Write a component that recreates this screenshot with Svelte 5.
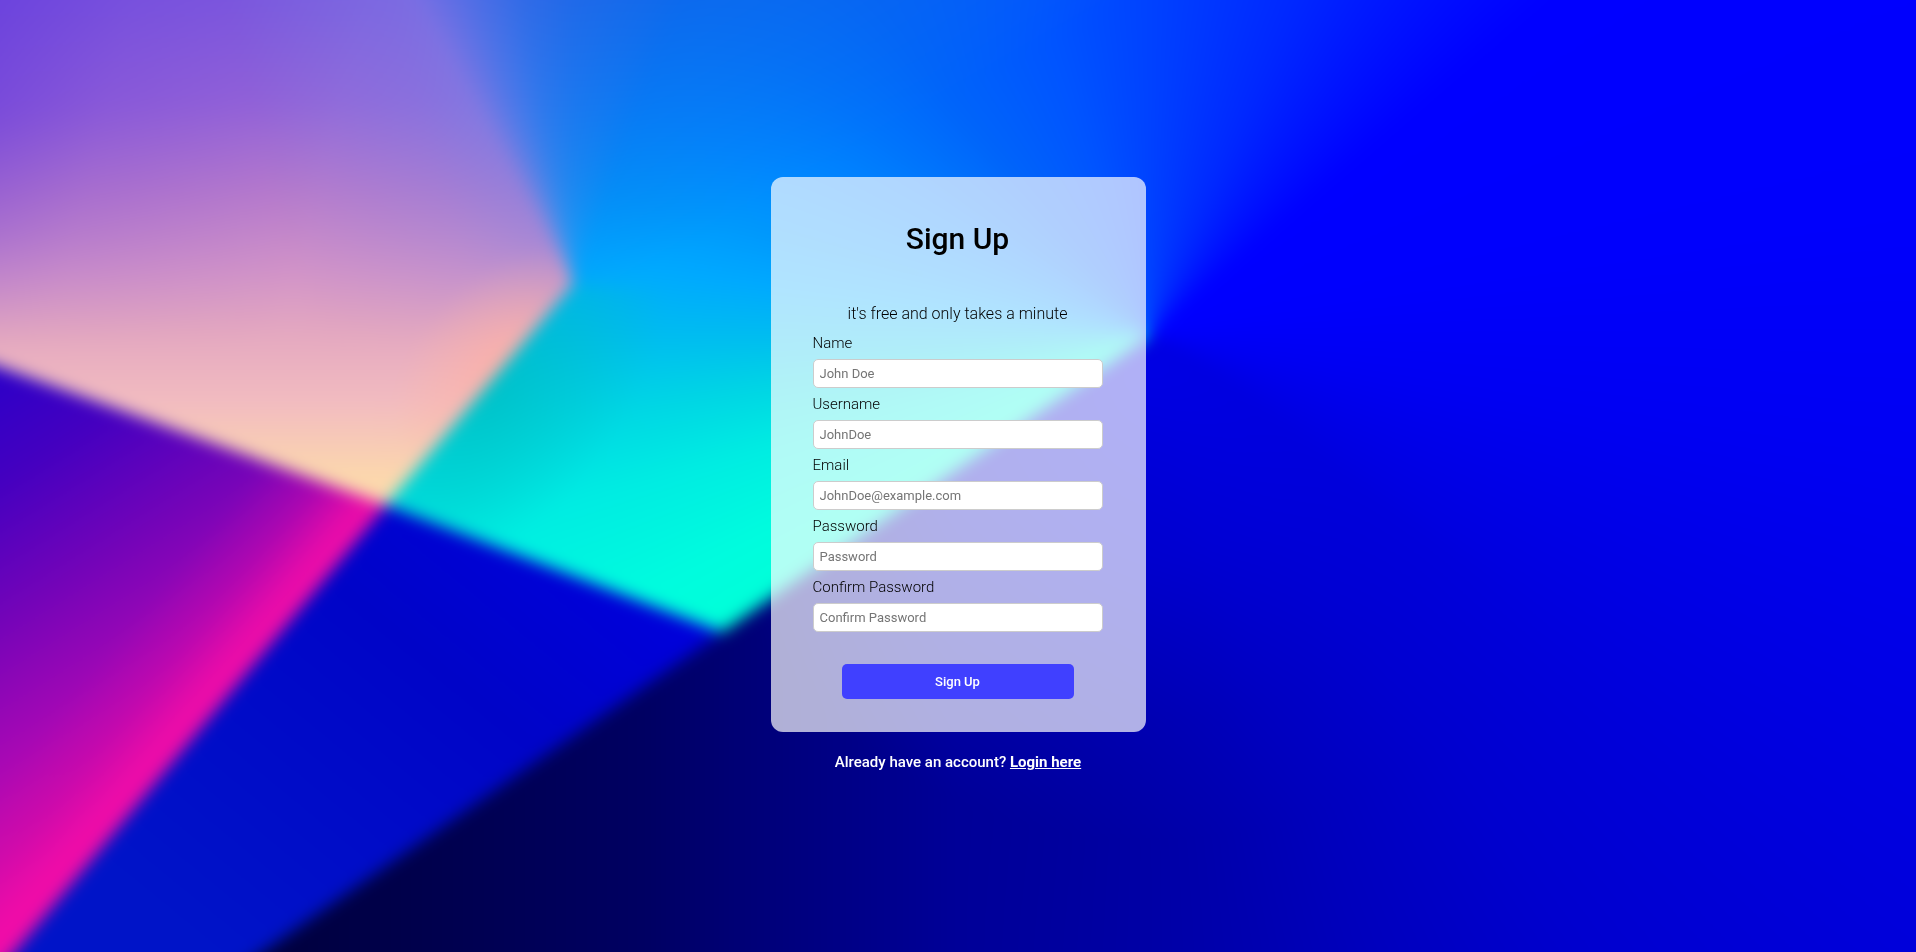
<script>
  const fields = [
    { id: 'name', label: 'Name', type: 'text', placeholder: 'John Doe' },
    { id: 'username', label: 'Username', type: 'text', placeholder: 'JohnDoe' },
    { id: 'email', label: 'Email', type: 'email', placeholder: 'JohnDoe@example.com' },
    { id: 'password', label: 'Password', type: 'password', placeholder: 'Password' },
    { id: 'confirm', label: 'Confirm Password', type: 'password', placeholder: 'Confirm Password' }
  ];
</script>

<!-- Wallpaper: blurred colour facets, scaled to cover the window -->
<div class="wallpaper" aria-hidden="true">
  <div class="scene">
    <svg class="facets" viewBox="-50 -50 2016 1052">
      <defs>
        <radialGradient id="teal" gradientUnits="userSpaceOnUse" cx="0" cy="0" r="1" gradientTransform="translate(490 390) rotate(-50) scale(230 130)">
          <stop offset="0" stop-color="#00bcb8" stop-opacity="0.65" />
          <stop offset="0.5" stop-color="#00c0bc" stop-opacity="0.35" />
          <stop offset="1" stop-color="#00c0c0" stop-opacity="0" />
        </radialGradient>
        <linearGradient id="azure" gradientUnits="userSpaceOnUse" x1="560" y1="-50" x2="720" y2="230">
          <stop offset="0" stop-color="#145ee4" stop-opacity="0.95" />
          <stop offset="1" stop-color="#1070e8" stop-opacity="0" />
        </linearGradient>
        <linearGradient id="navy" gradientUnits="userSpaceOnUse" x1="272" y1="0" x2="1250" y2="0">
          <stop offset="0" stop-color="#00003e" />
          <stop offset="0.38" stop-color="#000062" />
          <stop offset="0.48" stop-color="#000076" />
          <stop offset="0.7" stop-color="#000098" />
          <stop offset="1" stop-color="#0000b0" stop-opacity="0" />
        </linearGradient>
        <radialGradient id="glow" gradientUnits="userSpaceOnUse" cx="1150" cy="370" r="470">
          <stop offset="0" stop-color="#0000e4" />
          <stop offset="0.4" stop-color="#0000dc" stop-opacity="0.75" />
          <stop offset="0.75" stop-color="#0000d8" stop-opacity="0.25" />
          <stop offset="1" stop-color="#0000d8" stop-opacity="0" />
        </radialGradient>
        <linearGradient id="blue" gradientUnits="userSpaceOnUse" x1="600" y1="540" x2="240" y2="980">
          <stop offset="0" stop-color="#0000dc" />
          <stop offset="0.35" stop-color="#0004c8" />
          <stop offset="1" stop-color="#0014c8" />
        </linearGradient>
        <linearGradient id="violet" gradientUnits="userSpaceOnUse" x1="165" y1="265" x2="419" y2="671">
          <stop offset="0" stop-color="#2c00c8" />
          <stop offset="0.2" stop-color="#4400c0" />
          <stop offset="0.45" stop-color="#7404b8" />
          <stop offset="0.7" stop-color="#a808b4" />
          <stop offset="0.86" stop-color="#c80cac" />
          <stop offset="1" stop-color="#f010a8" />
        </linearGradient>
        <linearGradient id="rose" gradientUnits="userSpaceOnUse" x1="200" y1="728" x2="107" y2="651">
          <stop offset="0" stop-color="#f00ca8" />
          <stop offset="0.2" stop-color="#f00ca8" stop-opacity="0.85" />
          <stop offset="0.55" stop-color="#dc08a8" stop-opacity="0.35" />
          <stop offset="1" stop-color="#d008a8" stop-opacity="0" />
        </linearGradient>
      </defs>
      <polygon points="400,-50 1150,-50 1150,284 573,284" fill="url(#azure)" />
      <polygon points="573,284 386,505 722,632 900,310" fill="url(#teal)" />
      <polygon points="1150,336 722,632 190,1002 1300,1002" fill="url(#navy)" />
      <polygon points="1150,336 722,632 722,1002 1966,1002 1966,900" fill="url(#glow)" />
      <polygon points="386,505 722,632 190,1002 -27,1002" fill="url(#blue)" />
      <polygon points="-50,349 386,505 -27,1002 -50,1002" fill="url(#violet)" />
      <polygon points="-50,349 386,505 -27,1002 -50,1002" fill="url(#rose)" />
    </svg>
    <svg class="facets peach" viewBox="-50 -50 2016 1052">
      <defs>
        <linearGradient id="dusk" gradientUnits="userSpaceOnUse" x1="0" y1="0" x2="0" y2="505">
          <stop offset="0" stop-color="#805cde" />
          <stop offset="0.2" stop-color="#9666d8" />
          <stop offset="0.38" stop-color="#b87ccc" />
          <stop offset="0.54" stop-color="#d294c8" />
          <stop offset="0.66" stop-color="#e4a8c0" />
          <stop offset="0.8" stop-color="#f2bcc0" />
          <stop offset="0.95" stop-color="#fcd8ac" />
        </linearGradient>
        <linearGradient id="left" gradientUnits="userSpaceOnUse" x1="-20" y1="0" x2="340" y2="90">
          <stop offset="0" stop-color="#5c30dc" stop-opacity="0.6" />
          <stop offset="0.4" stop-color="#6030dc" stop-opacity="0.25" />
          <stop offset="1" stop-color="#6030dc" stop-opacity="0" />
        </linearGradient>
        <linearGradient id="fade" gradientUnits="userSpaceOnUse" x1="0" y1="120" x2="0" y2="350">
          <stop offset="0" stop-color="#fff" />
          <stop offset="0.5" stop-color="#999" />
          <stop offset="1" stop-color="#000" />
        </linearGradient>
        <mask id="upper" maskUnits="userSpaceOnUse" x="-50" y="-50" width="1000" height="600">
          <rect x="-50" y="-50" width="1000" height="600" fill="url(#fade)" />
        </mask>
        <linearGradient id="haze" gradientUnits="userSpaceOnUse" x1="550" y1="160" x2="280" y2="230">
          <stop offset="0" stop-color="#7484e8" stop-opacity="0.8" />
          <stop offset="0.4" stop-color="#7484e8" stop-opacity="0.35" />
          <stop offset="1" stop-color="#7484e8" stop-opacity="0" />
        </linearGradient>
        <radialGradient id="coral" gradientUnits="userSpaceOnUse" cx="0" cy="0" r="1" gradientTransform="translate(505 368) rotate(-50) scale(140 90)">
          <stop offset="0" stop-color="#ffb0a4" stop-opacity="0.85" />
          <stop offset="0.5" stop-color="#ffb4a4" stop-opacity="0.4" />
          <stop offset="1" stop-color="#ffb8a4" stop-opacity="0" />
        </radialGradient>
      </defs>
      <polygon points="-50,-50 -50,349 386,505 573,284 860,-50" fill="url(#dusk)" />
      <polygon points="-50,-50 -50,349 386,505 573,284 860,-50" fill="url(#left)" mask="url(#upper)" />
      <polygon points="-50,-50 -50,349 386,505 573,284 860,-50" fill="url(#haze)" mask="url(#upper)" />
      <polygon points="-50,-50 -50,349 386,505 573,284 860,-50" fill="url(#coral)" />
    </svg>
  </div>
</div>

<main>
  <section class="card">
    <h1>Sign Up</h1>
    <p class="lead">it's free and only takes a minute</p>
    <form onsubmit={(e) => e.preventDefault()}>
      {#each fields as field (field.id)}
        <label for={field.id}>{field.label}</label>
        <input id={field.id} name={field.id} type={field.type} placeholder={field.placeholder} />
      {/each}
      <button type="submit">Sign Up</button>
    </form>
  </section>
  <p class="login">Already have an account? <a href="#login">Login here</a></p>
</main>

<style>
  :global(body) {
    margin: 0;
    background: #0000e0;
  }

  .wallpaper {
    position: fixed;
    inset: 0;
    overflow: hidden;
    display: grid;
    place-content: center;
    z-index: -1;
  }

  .scene {
    position: relative;
    width: max(105.22vw, 211.76vh);
    aspect-ratio: 2016 / 1052;
    filter: blur(8px);
    background: conic-gradient(
      at 59.52% 36.69%,
      #0042ff 0deg,
      #0028ff 23deg,
      #0000ff 50deg,
      #0000fc 80deg,
      #0000f2 100deg,
      #0000da 129deg,
      #0000ce 145deg,
      #0000bc 161deg,
      #0000b0 170deg,
      #000090 197deg,
      #000066 220deg,
      #000044 235deg,
      #00ffd8 235deg,
      #00fcde 243deg,
      #00ece2 254deg,
      #00d6e4 262deg,
      #00bcf0 270deg,
      #00a8ff 278deg,
      #0098fc 285deg,
      #0088ff 294deg,
      #0074fc 307deg,
      #0064fa 320deg,
      #0054ff 342deg,
      #0042ff 360deg
    );
  }

  .facets {
    position: absolute;
    inset: 0;
    width: 100%;
    height: 100%;
  }

  .peach {
    mask-image: conic-gradient(
      at 30.9% 31.75%,
      rgb(0 0 0 / 0.16) 0deg,
      transparent 22deg,
      transparent 190deg,
      #000 200deg,
      #000 331deg,
      rgb(0 0 0 / 0.6) 341deg,
      rgb(0 0 0 / 0.32) 350deg,
      rgb(0 0 0 / 0.16) 360deg
    );
  }

  main {
    min-height: 100vh;
    display: flex;
    flex-direction: column;
    align-items: center;
    justify-content: center;
    font-family: Roboto, 'Open Sans', sans-serif;
    font-size: 16px;
    line-height: 24px;
    color: #000;
  }

  .card {
    box-sizing: border-box;
    width: 375px;
    max-width: 100%;
    padding: 42px 43px 33px 42px;
    border-radius: 12px;
    background: rgb(255 255 255 / 0.69);
  }

  h1 {
    margin: 0 0 43px;
    font-size: 30px;
    line-height: 40px;
    font-weight: 500;
    text-align: center;
  }

  .lead {
    margin: 0 0 5px;
    font-size: 16px;
    font-weight: 300;
    text-align: center;
  }

  form {
    display: flex;
    flex-direction: column;
  }

  label {
    margin-bottom: 3px;
    font-size: 15px;
    font-weight: 300;
    line-height: 25px;
  }

  input {
    box-sizing: border-box;
    height: 29px;
    margin-bottom: 4px;
    padding: 0 6px;
    border: 1px solid #ccc;
    border-radius: 5px;
    background: #fff;
    font-family: inherit;
    font-size: 13px;
    color: #222;
  }

  input::placeholder {
    color: #757575;
  }

  button {
    align-self: center;
    width: 80%;
    height: 35px;
    margin-top: 28px;
    border: 0;
    border-radius: 5px;
    background: #4040ff;
    color: #fff;
    font-family: inherit;
    font-size: 13px;
    font-weight: 500;
    cursor: pointer;
  }

  .login {
    margin: 18px 0 0;
    font-size: 15px;
    line-height: 25px;
    font-weight: 500;
    color: #fff;
  }

  .login a {
    color: #fff;
    font-weight: 700;
  }
</style>
